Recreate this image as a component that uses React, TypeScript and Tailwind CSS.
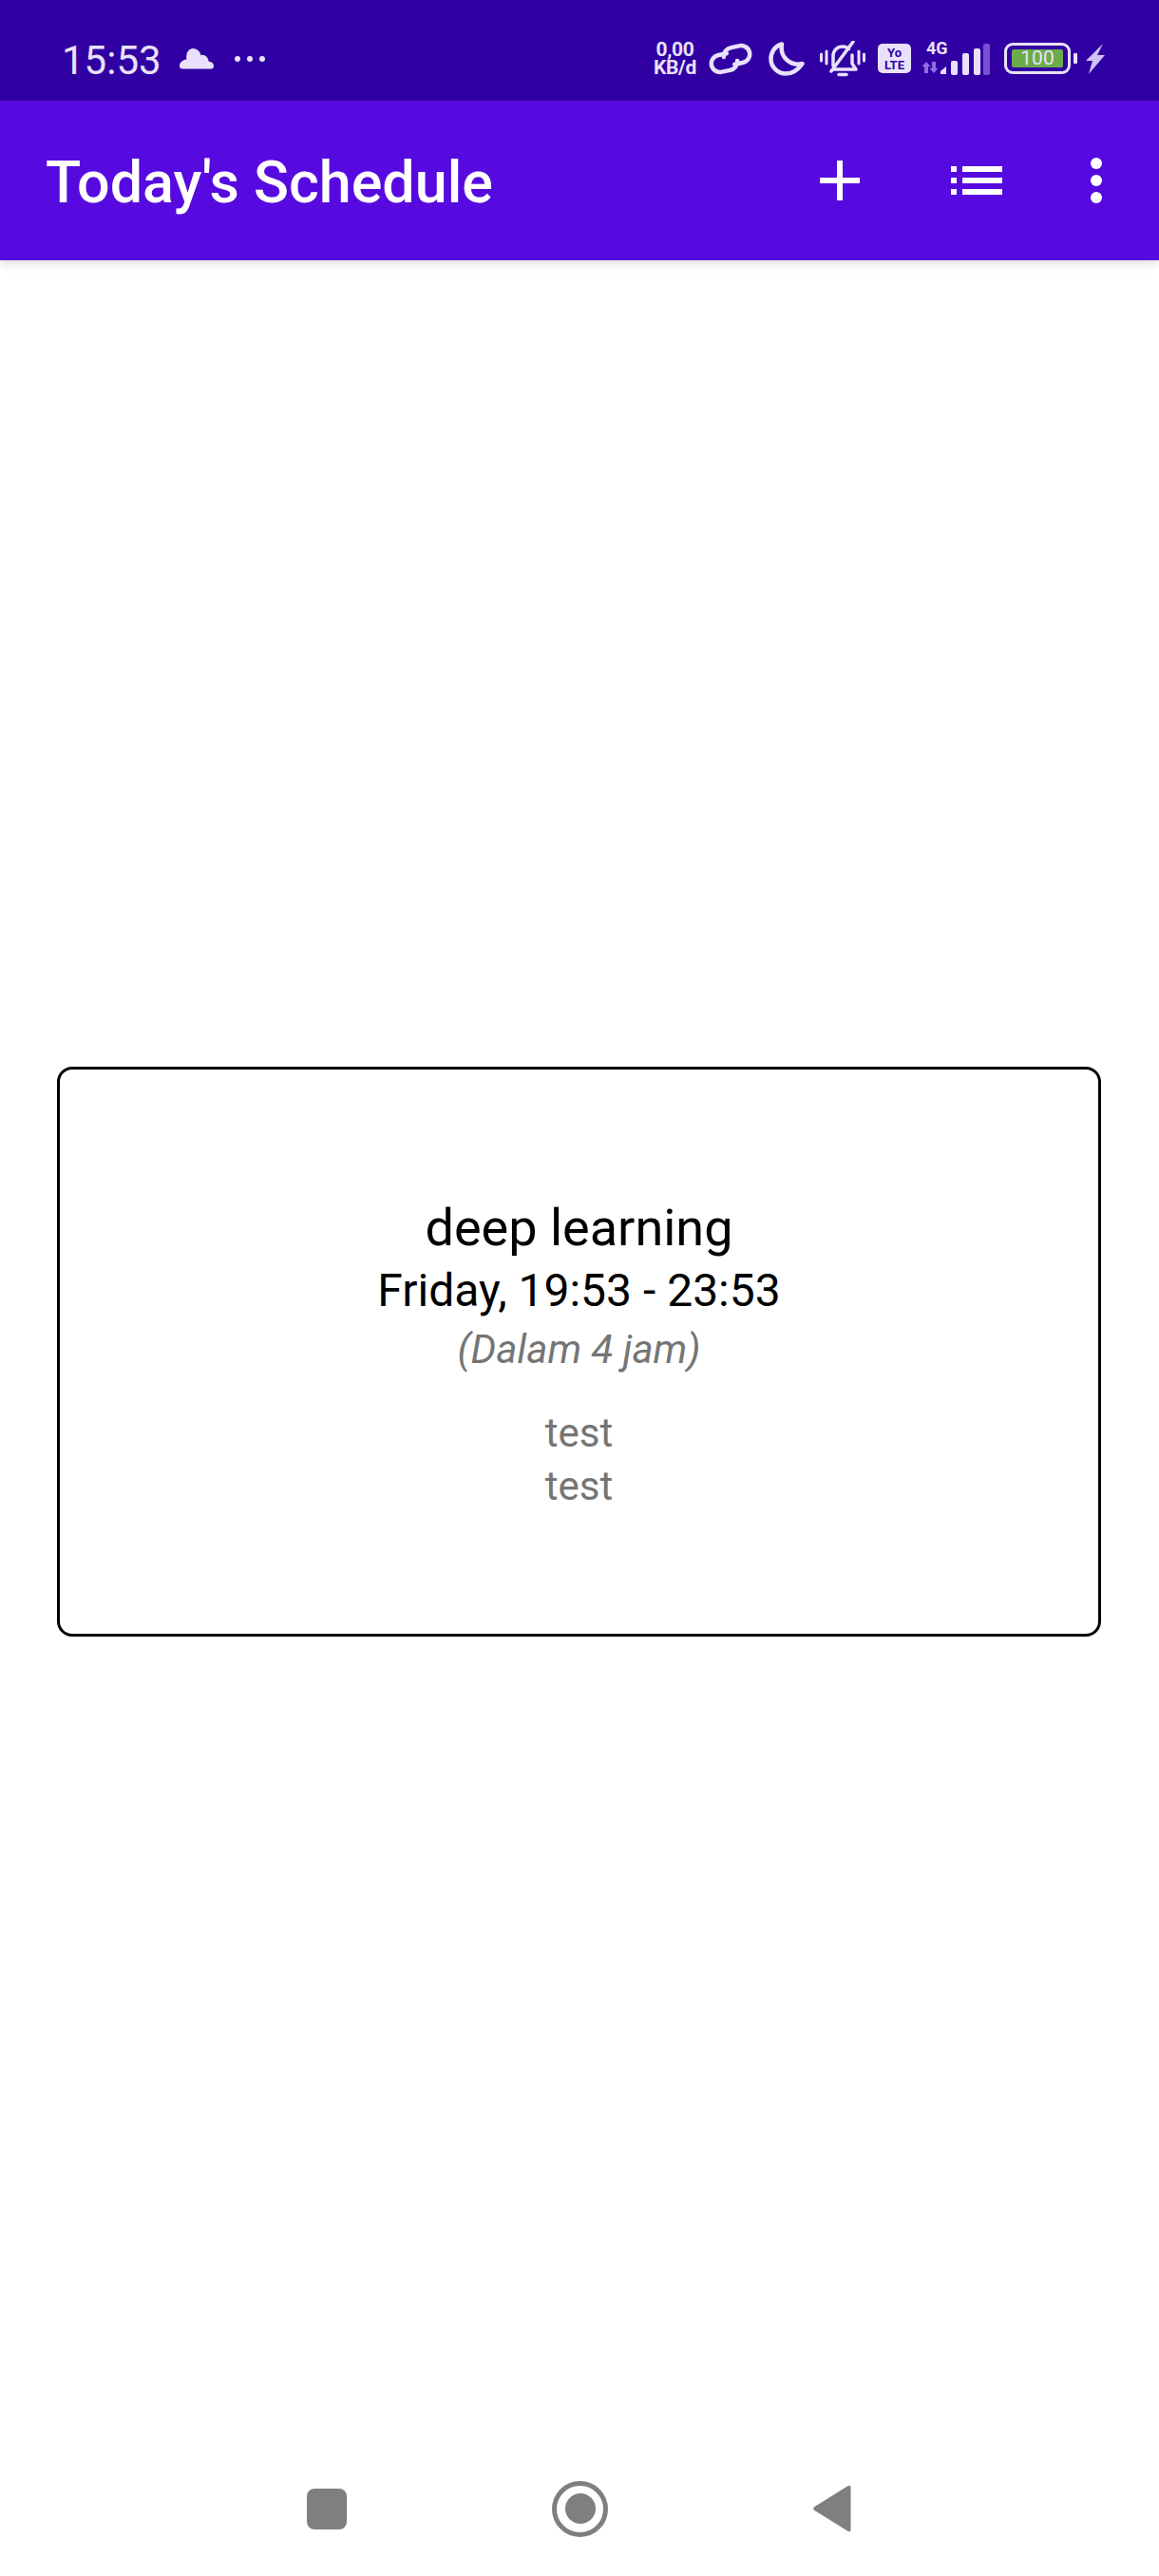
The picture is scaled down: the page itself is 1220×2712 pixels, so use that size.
import React from "react";

const tint = "#e9e1fb";

function Cloud() {
  return (
    <svg width="36" height="22" viewBox="0 0 36 22" className="ml-[19px] -mt-[4px]">
      <path d="M3 21.500h30c2 0 3-1.200 3-3 0-2.600-2-4.600-4.600-4.600h-.6C30 9.500 27.600 7 24.500 7c-.7 0-1.300.1-1.800.3C21.300 3 17.900 0 14.500 0 9.800 0 7.200 4 7.200 9.200c0 1 .1 1.600.2 2.300C3.500 12 0 14.500 0 18.500c0 1.800 1 3 3 3z" fill={tint} />
    </svg>
  );
}

function Dots() {
  return (
    <svg width="32" height="8" viewBox="0 0 32 8" className="ml-[22px] -mt-[4px]">
      <circle cx="3" cy="4" r="3" fill={tint} />
      <circle cx="16" cy="4" r="3" fill={tint} />
      <circle cx="29" cy="4" r="3" fill={tint} />
    </svg>
  );
}

function LinkIcon() {
  return (
    <svg width="48" height="34" viewBox="0 0 48 34" fill="none" stroke={tint} strokeWidth="4.500" strokeLinecap="round">
      <g transform="rotate(-12 24 17)">
        <path d="M21 10.500h-8.500C7 10.500 3 14.500 3 19.500s4 9 9.500 9H21c5 0 9-3.500 9.500-8" />
        <path d="M27 23.500h8.500c5.500 0 9.500-4 9.500-9s-4-9-9.500-9H27c-5 0-9 3.500-9.500 8" />
      </g>
    </svg>
  );
}

function Moon() {
  return (
    <svg width="38" height="36" viewBox="0 0 38 36" fill="none" stroke={tint} strokeWidth="4.500" strokeLinejoin="round">
      <path d="M14 2.500C6.500 4.500 2.500 11 2.500 18c0 8.500 7 15.500 15.500 15.500 7.500 0 13.500-4.500 17.500-10.500C24 26 11.500 17 14 2.500z" />
    </svg>
  );
}

function MutedBell() {
  return (
    <svg width="48" height="38" viewBox="0 0 48 38" fill="none" stroke={tint} strokeWidth="3.500" strokeLinecap="round" strokeLinejoin="round">
      <path d="M1.500 14v7M7 11v13M41 11v13M46.500 14v7" strokeWidth="3" />
      <path d="M14 26V16c0-6 4.500-10 10-10 2.800 0 5 1 6.500 2.500" />
      <path d="M34 15v9l4 6H14" />
      <path d="M35 1 12 32" />
      <path d="M20 35.500h8" />
    </svg>
  );
}

function YoLte() {
  return (
    <div className="ml-[13px] w-[35px] h-[31px] rounded-[5px] bg-[#e9e1fb] flex flex-col items-center justify-center text-[#3100a3] font-bold text-[13px] leading-[13px]">
      <div>Yo</div>
      <div>LTE</div>
    </div>
  );
}

function Signal() {
  return (
    <div className="relative ml-[11px] w-[72px] h-[34px]">
      <span className="absolute left-[5px] top-[-3px] text-[18px] leading-[18px] font-bold text-[#e9e1fb]">4G</span>
      <svg width="72" height="34" viewBox="0 0 72 34" className="block">
        <path d="M5 21l4.500 5H7v7H3v-7H.5zM13 33l-4.500-5H11v-7h4v7h2.500z" fill="#8f6fdc" transform="translate(0 -1)" />
        <path d="M20 33v-3l6-5v8z" fill={tint} />
        <rect x="31" y="19" width="7" height="15" rx="2" fill={tint} />
        <rect x="43" y="11" width="7" height="23" rx="2" fill={tint} />
        <rect x="55" y="6" width="7" height="28" rx="2" fill={tint} />
        <rect x="65" y="1" width="7" height="33" rx="2" fill="#7a52d0" />
      </svg>
    </div>
  );
}

function Battery() {
  return (
    <div className="ml-[15px] flex items-center">
      <div className="w-[70px] h-[33px] rounded-[9px] border-[3px] border-[#e9e1fb] flex items-center justify-center">
        <div className="w-[54px] h-[19px] rounded-[2px] bg-[#6bac4a] flex items-center justify-center text-[#e9e1fb] text-[21px] leading-[19px]">
          100
        </div>
      </div>
      <div className="ml-[3px] w-[4px] h-[11px] rounded-[1px] bg-[#e9e1fb]" />
    </div>
  );
}

function Bolt() {
  return (
    <svg width="20" height="32" viewBox="0 0 20 32" className="ml-[9px]">
      <path d="M18 0 0 18h7L3 32 20 12h-8z" fill="#cfc1f4" />
    </svg>
  );
}

export default function App() {
  return (
    <div className="w-[1220px] h-[2712px] bg-white flex flex-col overflow-hidden" style={{ fontFamily: "Roboto, sans-serif" }}>
      <div className="h-[106px] bg-[#3100a3] flex items-center pl-[65px] pr-[57px] pt-[22px] shrink-0">
        <span className="text-[42px] leading-none text-[#e9e1fb]">15:53</span>
        <Cloud />
        <Dots />
        <div className="ml-auto -mt-[5px] flex items-center">
          <div className="w-[45px] flex flex-col items-center text-[#e9e1fb] font-bold text-[21px] leading-[19px] tracking-[-0.3px]">
            <div>0,00</div>
            <div>KB/d</div>
          </div>
          <div className="ml-[12px] flex"><LinkIcon /></div>
          <div className="ml-[16px] flex"><Moon /></div>
          <div className="ml-[16px] flex"><MutedBell /></div>
          <YoLte />
          <Signal />
          <Battery />
          <Bolt />
        </div>
      </div>

      <div className="relative z-10 h-[168px] bg-[#570adf] flex items-center pl-[48px] shrink-0 shadow-[0_4px_10px_rgba(0,0,0,0.12)]">
        <h1 className="text-[61px] mt-[4px] leading-none font-medium text-white">Today's Schedule</h1>
        <div className="ml-auto flex items-center">
          <svg width="42" height="42" viewBox="0 0 42 42">
            <path d="M18 0h6v18h18v6H24v18h-6V24H0v-6h18z" fill="#fff" />
          </svg>
          <svg width="54" height="30" viewBox="0 0 54 30" className="ml-[96px]">
            <path d="M0 0h6v6H0zM12 0h42v6H12zM0 12h6v6H0zM12 12h42v6H12zM0 24h6v6H0zM12 24h42v6H12z" fill="#fff" />
          </svg>
          <svg width="12" height="48" viewBox="0 0 12 48" className="ml-[93px] mr-[60px]">
            <circle cx="6" cy="6" r="6" fill="#fff" />
            <circle cx="6" cy="24" r="6" fill="#fff" />
            <circle cx="6" cy="42" r="6" fill="#fff" />
          </svg>
        </div>
      </div>

      <main className="flex-1 flex items-center justify-center pl-[60px] pr-[61px]">
        <div className="w-full h-[600px] rounded-[16px] border-[3px] border-black flex flex-col items-center justify-center text-center pt-[7px]">
          <div className="text-[54px] leading-[64px] text-black">deep learning</div>
          <div className="text-[48px] leading-[68px] text-black">Friday, 19:53 - 23:53</div>
          <div className="text-[42px] leading-[56px] italic text-[#757575]">(Dalam 4 jam)</div>
          <div className="mt-[32px] text-[42px] leading-[56px] text-[#757575]">
            <div>test</div>
            <div>test</div>
          </div>
        </div>
      </main>

      <div className="h-[140px] shrink-0 flex items-center pl-[323px] pb-[2px]">
        <div className="w-[42px] h-[43px] rounded-[8px] bg-[#7f7f7f]" />
        <div className="ml-[216px] w-[59px] h-[59px] rounded-full border-[5px] border-[#7f7f7f] flex items-center justify-center">
          <div className="w-[32px] h-[32px] rounded-full bg-[#7f7f7f]" />
        </div>
        <svg width="40" height="50" viewBox="0 0 40 50" className="ml-[216px]">
          <path d="M36 1.500c2-1.500 3.500-.5 3.500 1.500v44c0 2-1.500 3-3.500 1.500L1.500 27c-1.800-1.200-1.800-2.800 0-4z" fill="#7f7f7f" />
        </svg>
      </div>
    </div>
  );
}
